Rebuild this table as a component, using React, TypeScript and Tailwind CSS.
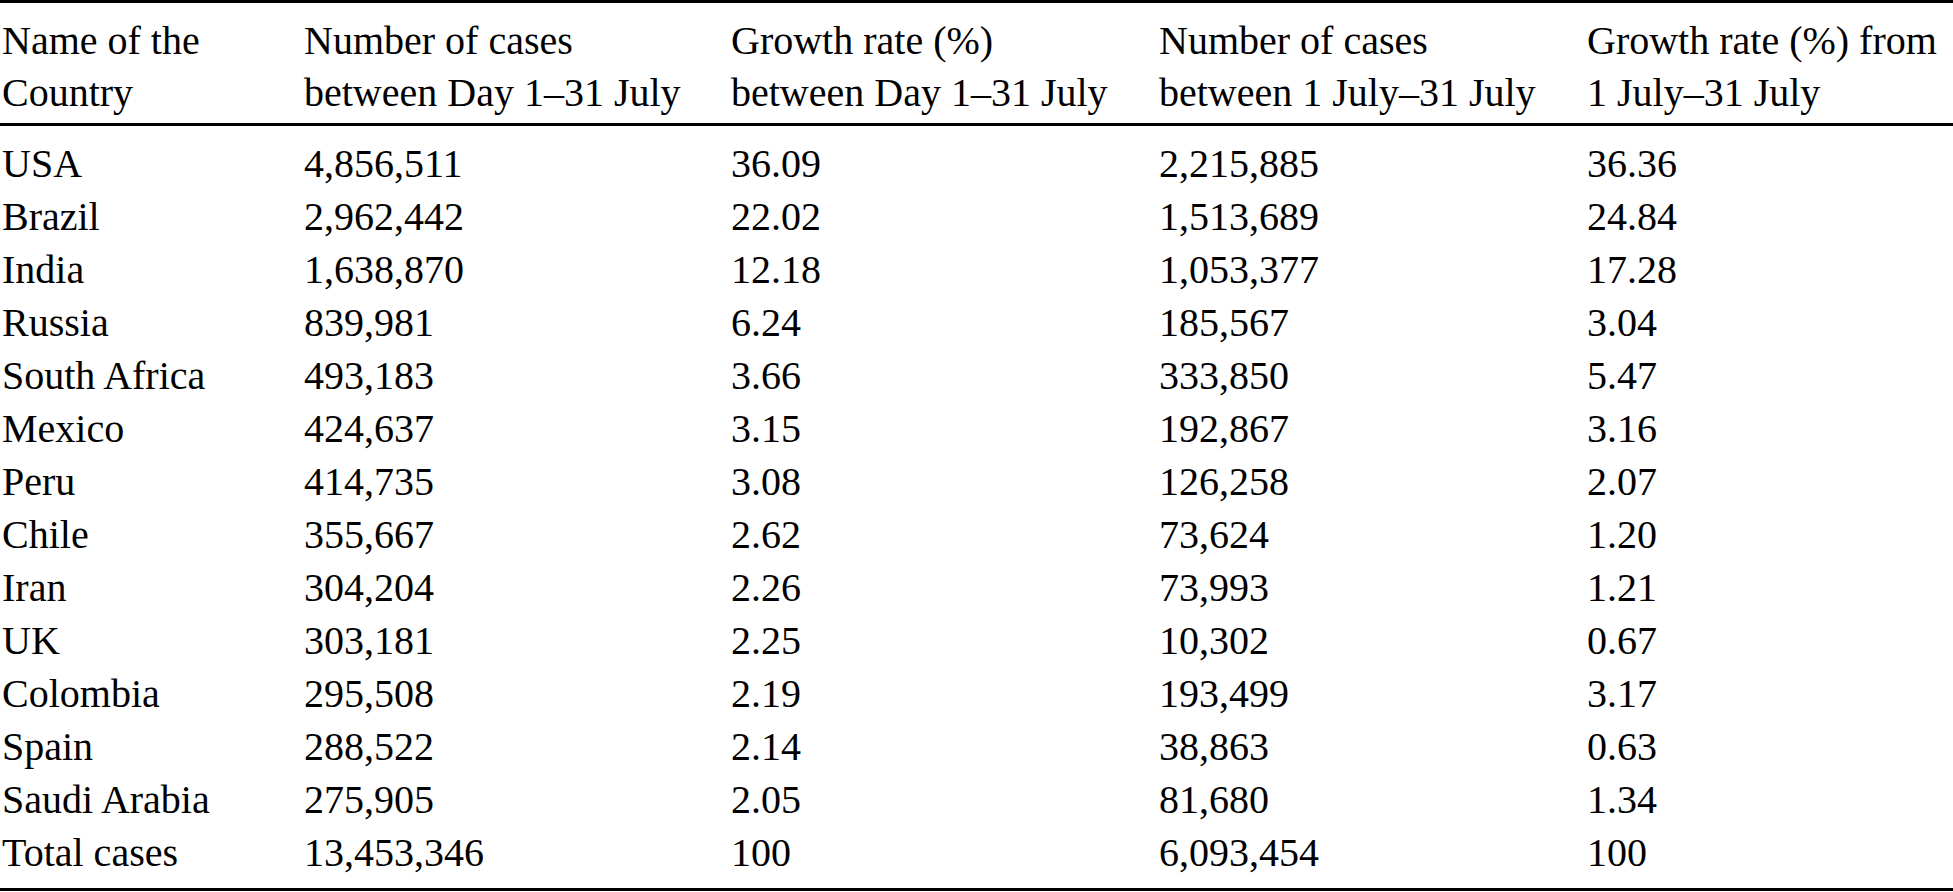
type Row = {
  country: string;
  casesDay: string;
  rateDay: string;
  casesJuly: string;
  rateJuly: string;
};

const rows: Row[] = [
  { country: 'USA', casesDay: '4,856,511', rateDay: '36.09', casesJuly: '2,215,885', rateJuly: '36.36' },
  { country: 'Brazil', casesDay: '2,962,442', rateDay: '22.02', casesJuly: '1,513,689', rateJuly: '24.84' },
  { country: 'India', casesDay: '1,638,870', rateDay: '12.18', casesJuly: '1,053,377', rateJuly: '17.28' },
  { country: 'Russia', casesDay: '839,981', rateDay: '6.24', casesJuly: '185,567', rateJuly: '3.04' },
  { country: 'South Africa', casesDay: '493,183', rateDay: '3.66', casesJuly: '333,850', rateJuly: '5.47' },
  { country: 'Mexico', casesDay: '424,637', rateDay: '3.15', casesJuly: '192,867', rateJuly: '3.16' },
  { country: 'Peru', casesDay: '414,735', rateDay: '3.08', casesJuly: '126,258', rateJuly: '2.07' },
  { country: 'Chile', casesDay: '355,667', rateDay: '2.62', casesJuly: '73,624', rateJuly: '1.20' },
  { country: 'Iran', casesDay: '304,204', rateDay: '2.26', casesJuly: '73,993', rateJuly: '1.21' },
  { country: 'UK', casesDay: '303,181', rateDay: '2.25', casesJuly: '10,302', rateJuly: '0.67' },
  { country: 'Colombia', casesDay: '295,508', rateDay: '2.19', casesJuly: '193,499', rateJuly: '3.17' },
  { country: 'Spain', casesDay: '288,522', rateDay: '2.14', casesJuly: '38,863', rateJuly: '0.63' },
  { country: 'Saudi Arabia', casesDay: '275,905', rateDay: '2.05', casesJuly: '81,680', rateJuly: '1.34' },
  { country: 'Total cases', casesDay: '13,453,346', rateDay: '100', casesJuly: '6,093,454', rateJuly: '100' },
];

const cols = 'grid grid-cols-[302px_427px_428px_428px_1fr] pl-[2px]';

export default function App() {
  return (
    <div className="min-h-screen bg-white text-black font-['Liberation_Serif','Times_New_Roman',serif] text-[40px] leading-[52px]">
      <div className="border-t-[3px] border-black pt-[12px] pb-[4px]">
        <div className={cols}>
          <div>
            Name of the
            <br />
            Country
          </div>
          <div>
            Number of cases
            <br />
            between Day 1–31 July
          </div>
          <div>
            Growth rate (%)
            <br />
            between Day 1–31 July
          </div>
          <div>
            Number of cases
            <br />
            between 1 July–31 July
          </div>
          <div className="whitespace-nowrap">
            Growth rate (%) from
            <br />
            1 July–31 July
          </div>
        </div>
      </div>
      <div className="border-t-[3px] border-b-[3px] border-black pt-[12px] pb-[8px]">
        {rows.map((row) => (
          <div key={row.country} className={`${cols} h-[53px]`}>
            <div>{row.country}</div>
            <div>{row.casesDay}</div>
            <div>{row.rateDay}</div>
            <div>{row.casesJuly}</div>
            <div>{row.rateJuly}</div>
          </div>
        ))}
      </div>
    </div>
  );
}
